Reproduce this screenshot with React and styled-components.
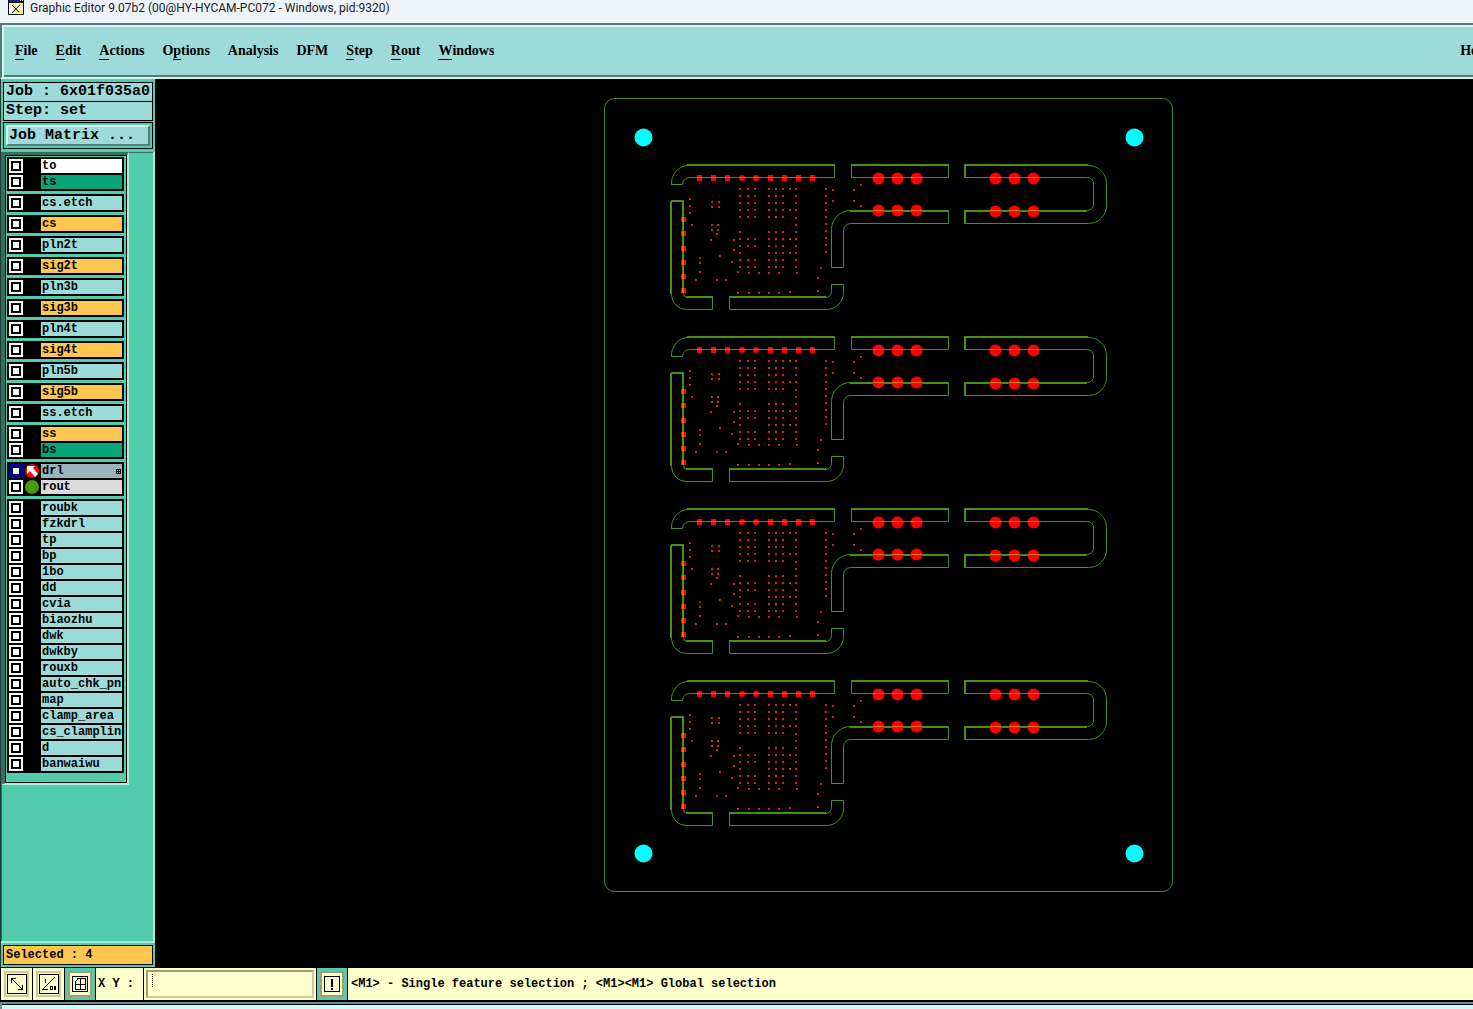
import styled, { createGlobalStyle, css } from "styled-components";

const colors = {
  aqua: "#9ddbda",
  teal: "#53ccad",
  tealDark: "#34705f",
  tealLight: "#a9ecd3",
  gold: "#ffc650",
  green: "#08a57b",
  cream: "#ffffcc",
  creamDark: "#a39c78",
  trace: "#459213",
  pad: "#ff0000",
  via: "#d62226",
};

const GlobalStyle = createGlobalStyle`
  * {
    box-sizing: border-box;
  }

  body {
    margin: 0;
    background: #000;
    overflow: hidden;
  }

  button, input {
    margin: 0;
    padding: 0;
    border-radius: 0;
    font: inherit;
    color: inherit;
  }
`;

const Window = styled.div`
  display: flex;
  flex-direction: column;
  height: 100vh;
  color: #000;
  font-family: "Liberation Mono", monospace;
  font-size: 12px;
  font-weight: bold;
`;

const TitleBar = styled.header`
  display: flex;
  align-items: flex-start;
  gap: 6px;
  height: 23px;
  padding-left: 8px;
  background: #eef3fa;
  color: #1b1b1b;
  font-family: Roboto, "Open Sans", sans-serif;
  font-size: 12px;
  font-weight: normal;
  line-height: 16px;
  white-space: nowrap;
`;

const MenuBar = styled.nav`
  display: flex;
  align-items: center;
  gap: 18px;
  flex: none;
  width: calc(100% + 20px);
  height: 56px;
  padding: 0 2px 0 13px;
  background: ${colors.aqua};
  border: 2px solid #547b7b;
  border-bottom-color: #d5f5f3;
  box-shadow: inset 2px 2px #d5f5f3, inset 0 -2px #547b7b;
  font-family: "Liberation Serif", serif;
  font-size: 14px;
`;

const MenuItem = styled.button`
  height: 20px;
  border: 0;
  background: none;
  line-height: 16px;
  ${({ $last }) => $last && css`margin-left: auto;`}

  span {
    display: inline-block;
    height: 17px;
    border-bottom: 1px solid #000;
  }
`;

const Workspace = styled.div`
  display: flex;
  flex: 1;
  min-height: 0;
`;

const Sidebar = styled.aside`
  display: flex;
  flex-direction: column;
  width: 155px;
  flex: none;
  border-left: 1px solid #1b3a33;
  background: ${colors.teal};
`;

const JobInfo = styled.div`
  display: grid;
  gap: 1px;
  margin: 3px 2px 0;
  border: 1px solid #000;
  background: #000;
  font-size: 15px;
`;

const InfoLine = styled.div`
  height: 18px;
  padding-left: 2px;
  background: ${colors.aqua};
  line-height: 18px;
  white-space: nowrap;
  overflow: hidden;
`;

const MatrixBox = styled.div`
  height: 27px;
  margin: 1px 2px 3px;
  padding: 2px;
  border: 1px solid #000;
  font-size: 15px;
`;

const MatrixButton = styled.button`
  display: block;
  width: 100%;
  height: 21px;
  padding-left: 1px;
  border: 2px solid;
  border-color: #d5f5f3 #547b7b #547b7b #d5f5f3;
  background: ${colors.aqua};
  line-height: 16px;
  text-align: left;
`;

const LayerArea = styled.div`
  flex: 1;
  min-height: 0;
  border: solid ${colors.tealLight};
  border-width: 0 2px 2px 0;
  box-shadow: inset 1px 1px ${colors.tealDark};
`;

const LayerFrame = styled.div`
  width: 128px;
  border: solid;
  border-width: 3px 2px 2px 4px;
  border-color: ${colors.tealDark} ${colors.tealLight} ${colors.tealLight} ${colors.tealDark};
`;

const LayerList = styled.div`
  display: flex;
  flex-direction: column;
  gap: 3px;
  padding: 1px 2px 9px 1px;
  border: 1px solid #000;
`;

const LayerGroup = styled.div`
  display: grid;
  gap: 2px;
  padding: 2px;
  background: #000;
`;

const LayerRow = styled.label`
  display: grid;
  grid-template-columns: 14px 18px 1fr;
  height: 14px;
`;

const LayerCheck = styled.input`
  appearance: none;
  width: 14px;
  height: 14px;
  border: 2px solid ${({ $active }) => ($active ? "#0000b8" : "#fff")};
  background: #fff;
  box-shadow: inset 0 0 0 2px ${({ $active }) => ($active ? "#000060" : "#000")};
`;

const Marker = styled.span`
  display: grid;
  place-items: center;
  height: 14px;
`;

const LayerName = styled.span`
  display: flex;
  align-items: center;
  justify-content: space-between;
  min-width: 0;
  padding-left: 1px;
  background: ${({ $color }) => $color || colors.aqua};
  line-height: 14px;
  white-space: nowrap;
  overflow: hidden;

  svg {
    margin-right: 1px;
  }
`;

const Selected = styled.div`
  height: 20px;
  margin: 2px;
  padding-left: 2px;
  border: 1px solid #000;
  background: ${colors.gold};
  line-height: 18px;
`;

const Canvas = styled.main`
  flex: 1;
  min-width: 0;
  background: #000;

  svg {
    display: block;
    width: 100%;
    height: 100%;
  }
`;

const StatusBar = styled.footer`
  display: flex;
  gap: 1px;
  height: 35px;
  padding: 1px 0 2px 1px;
  background: #000;
`;

const ToolButton = styled.button`
  display: grid;
  place-items: center;
  width: ${({ $on }) => ($on ? "30px" : "31px")};
  height: 32px;
  flex: none;
  border: 3px solid ${({ $on }) => ($on ? colors.teal : colors.cream)};
  background: ${colors.cream};
  box-shadow: inset 0 0 0 2px ${({ $on }) => ($on ? colors.creamDark : "#cdc99d")};
`;

const CoordLabel = styled.label`
  width: 47px;
  padding-left: 2px;
  background: ${colors.cream};
  line-height: 32px;
  white-space: nowrap;
`;

const CoordField = styled.div`
  width: 172px;
  padding: 2px;
  background: ${colors.cream};
`;

const CoordInput = styled.input`
  display: block;
  width: 100%;
  height: 28px;
  padding: 0 4px;
  border: 2px solid;
  border-color: ${colors.creamDark} #cdc99d #cdc99d ${colors.creamDark};
  background:
    repeating-linear-gradient(#000 0 1px, transparent 1px 2px) 4px 2px / 1px 14px no-repeat,
    ${colors.cream};
  outline: 0;
`;

const Message = styled.output`
  flex: 1;
  padding-left: 3px;
  background: ${colors.cream};
  line-height: 32px;
  white-space: nowrap;
`;

const LowerEdge = styled.div`
  height: 7px;
  flex: none;
  border-top: 2px solid #6b9290;
  border-left: 2px solid #6b9290;
  background: #ccfcfc;
  box-shadow: inset 0 1px #000;
`;

const menus = [
  ["", "F", "ile"],
  ["", "E", "dit"],
  ["", "A", "ctions"],
  ["O", "p", "tions"],
  ["Analysis", "", ""],
  ["DFM", "", ""],
  ["", "S", "tep"],
  ["", "R", "out"],
  ["", "W", "indows"],
  ["Help", "", ""],
];

const groups = [
  [{ name: "to", color: "#fff" }, { name: "ts", color: colors.green }],
  [{ name: "cs.etch" }],
  [{ name: "cs", color: colors.gold }],
  [{ name: "pln2t" }],
  [{ name: "sig2t", color: colors.gold }],
  [{ name: "pln3b" }],
  [{ name: "sig3b", color: colors.gold }],
  [{ name: "pln4t" }],
  [{ name: "sig4t", color: colors.gold }],
  [{ name: "pln5b" }],
  [{ name: "sig5b", color: colors.gold }],
  [{ name: "ss.etch" }],
  [{ name: "ss", color: colors.gold }, { name: "bs", color: colors.green }],
  [
    { name: "drl", color: "#9bb3bd", active: true, marker: "#f00" },
    { name: "rout", color: "#dadada", marker: "#459a06" },
  ],
  [
    "roubk", "fzkdrl", "tp", "bp", "1bo", "dd", "cvia", "biaozhu", "dwk", "dwkby",
    "rouxb", "auto_chk_pnl", "map", "clamp_area", "cs_clampline", "d", "banwaiwu",
  ].map((name) => ({ name })),
];

const column = (x, ys) => ys.map((y) => [x, y]);
const upper = [189, 196, 203, 210, 217];
const lower = [232, 239, 246, 253, 260, 267];

// drill hits of one unit, the other units repeat them every 172
const vias = [
  ...column(740, [...upper, ...lower]),
  ...[748, 755].flatMap((x) => column(x, [...upper, 239, 246, 260, 267])),
  ...[769, 776, 783].flatMap((x) => column(x, [...upper, ...lower])),
  ...column(790, [189, 210, 239, 253, 292]),
  ...column(796, [189, 196, 203, 210, 218, 225, ...lower]),
  ...column(826, [189, 196, 203, 210, 217, 224, 231, 238, 245, 252]),
  ...[833, 854].flatMap((x) => column(x, [190, 201])),
  ...column(861, [185, 206]),
  ...[749, 759, 769, 779].flatMap((x) => column(x, [273, 293])),
  ...column(690, [199, 206, 213]),
  ...[712, 719].flatMap((x) => column(x, [202, 207])),
  ...[712, 718].flatMap((x) => column(x, [225, 230])),
  ...column(700, [258, 263, 272]),
  [797, 273], [738, 272], [738, 293],
  [821, 268], [818, 278], [818, 291],
  [692, 225], [717, 234], [711, 240], [734, 240], [734, 250],
  [720, 256], [732, 262], [696, 280], [717, 280], [726, 280],
];

const topPads = [699, 713, 727, 742, 756, 770, 784, 798, 812];
const sidePads = [219, 233, 248, 262, 276, 290];
const holes = [
  ...[878, 897, 916].flatMap((x) => column(x, [178, 210])),
  ...[995, 1014, 1033].flatMap((x) => column(x, [178, 211])),
];

const Unit = ({ offset }) => (
  <g transform={`translate(0 ${offset})`}>
    <g fill={colors.via} shapeRendering="crispEdges">
      {vias.map(([x, y]) => (
        <rect key={`${x}-${y}`} x={x - 1} y={y - 1} width="2" height="2" />
      ))}
    </g>
    <g fill="none" stroke={colors.trace}>
      <path d="M834.500 165.500H688.500A17 18 0 0 0 671.500 184.500H682.500A7 7 0 0 1 689.500 177.500H834.500Z" />
      <path d="M671.500 201.500H683.500V293.500A4 4 0 0 0 687.500 297.500H712.500V309.500H686.500A15 15 0 0 1 671.500 294.500Z" />
      <path d="M729.500 297.500H825.500A6 6 0 0 0 831.500 291.500V284.500H843.500V292.500A17 17 0 0 1 826.500 309.500H729.500Z" />
      <path d="M831.500 267.500H843.500V230.500A7 7 0 0 1 850.500 223.500H948.500V210.500H850.500A19 19 0 0 0 831.500 229.500Z" />
      <path d="M851.500 165.500H948.500V177.500H851.500Z" />
      <path d="M964.500 165.500H1088.500A18 18 0 0 1 1106.500 183.500V205.500A18 18 0 0 1 1088.500 223.500H964.500V210.500H1087.500A6 6 0 0 0 1093.500 204.500V183.500A6 6 0 0 0 1087.500 177.500H964.500Z" />
    </g>
    <g fill="none" stroke={colors.trace} strokeWidth="2" shapeRendering="crispEdges">
      <path d="M687 165H835M851 165H949M964 165H1088M850 211H949M964 211H1087M671 201H684M686 297H713M729 297H826" />
      <path d="M671 201V294M683 201V293M965 165V178M965 211V224" />
    </g>
    <g fill={colors.pad}>
      {topPads.map((x) =>
        x === 742 || x === 756 ? (
          <circle key={x} cx={x} cy="178" r="3" />
        ) : (
          <rect key={x} x={x - 2} y="175" width="5" height="6" />
        )
      )}
      {sidePads.map((y) => (
        <rect key={y} x="681" y={y - 2} width="5" height="5" />
      ))}
      {holes.map(([x, y]) => (
        <circle key={`${x}-${y}`} cx={x + 0.5} cy={y + 0.5} r="6" />
      ))}
    </g>
    <g stroke="#e07800" shapeRendering="crispEdges">
      {topPads.map((x) => (
        <path key={x} d={`M${x - 2} 177.500h5`} />
      ))}
      {sidePads.map((y) => (
        <path key={y} strokeWidth="2" d={`M683 ${y - 2}v5`} />
      ))}
      {holes.map(([x, y]) => (
        <path key={`${x}-${y}`} d={`M${x - 5} ${y < 200 ? 177.5 : 210.5}h11`} />
      ))}
    </g>
  </g>
);

const Board = () => (
  <svg viewBox="155 79 1318 888" role="img" aria-label="set">
    <rect x="604.500" y="98.500" width="568" height="793" rx="10" fill="none" stroke={colors.trace} />
    {[[643, 137], [1134, 137], [643, 853], [1134, 853]].map(([x, y]) => (
      <circle key={`${x}-${y}`} cx={x + 0.5} cy={y + 0.5} r="9" fill="#0ff" />
    ))}
    {[0, 172, 344, 516].map((offset) => (
      <Unit key={offset} offset={offset} />
    ))}
  </svg>
);

const WindowIcon = () => (
  <svg width="16" height="16" viewBox="0 0 16 16" shapeRendering="crispEdges">
    <path d="M0 0h16v15H0z" fill="#111" />
    <path d="M1 0h10v2H1z" fill="#162a7a" />
    <path d="M12 0h1v1h-1zM14 0h1v1h-1z" fill="#fff" />
    <path d="M1 3h14v11H1z" fill="#f5f3e4" />
    <path d="M3 4h3l2 3 3-3h2L9 8l4 5h-3L8 10l-3 3H3l4-5z" fill="#e8df1c" />
    <path d="M4 5l7 7M12 5l-8 8" stroke="#333" fill="none" />
  </svg>
);

const ToolIcon = ({ children }) => (
  <svg width="20" height="20" viewBox="0 0 20 20" fill="none" stroke="#000" shapeRendering="crispEdges">
    {children}
  </svg>
);

const LayerMarker = ({ layer }) => (
  <svg width="14" height="14" viewBox="0 0 14 14">
    <circle cx="7" cy="7" r="7" fill={layer.marker} />
    {layer.active && <path d="M2 2h8L8 4l5 6-3 3-5-6-3 3z" fill="#fff" />}
  </svg>
);

const App = () => {
  return (
    <>
      <GlobalStyle />
      <Window>
        <TitleBar>
          <WindowIcon />
          Graphic Editor 9.07b2 (00@HY-HYCAM-PC072 - Windows, pid:9320)
        </TitleBar>
        <MenuBar>
          {menus.map(([before, key, after]) => (
            <MenuItem key={before + key + after} $last={before === "Help"}>
              {before}
              {key && <span>{key}</span>}
              {after}
            </MenuItem>
          ))}
        </MenuBar>
        <Workspace>
          <Sidebar>
            <JobInfo>
              <InfoLine>Job : 6x01f035a0</InfoLine>
              <InfoLine>Step: set</InfoLine>
            </JobInfo>
            <MatrixBox>
              <MatrixButton>Job Matrix ...</MatrixButton>
            </MatrixBox>
            <LayerArea>
              <LayerFrame>
                <LayerList>
                  {groups.map((layers) => (
                    <LayerGroup key={layers[0].name}>
                      {layers.map((layer) => (
                        <LayerRow key={layer.name}>
                          <LayerCheck type="checkbox" $active={layer.active} />
                          <Marker>{layer.marker && <LayerMarker layer={layer} />}</Marker>
                          <LayerName $color={layer.color}>
                            {layer.name}
                            {layer.active && (
                              <svg width="5" height="5" viewBox="0 0 5 5" fill="none" stroke="#000" shapeRendering="crispEdges">
                                <path d="M.5 .5h4v4h-4zM2.500 0v5M0 2.500h5" />
                              </svg>
                            )}
                          </LayerName>
                        </LayerRow>
                      ))}
                    </LayerGroup>
                  ))}
                </LayerList>
              </LayerFrame>
            </LayerArea>
            <Selected>Selected : 4</Selected>
          </Sidebar>
          <Canvas>
            <Board />
          </Canvas>
        </Workspace>
        <StatusBar>
          <ToolButton aria-label="Zoom extents">
            <ToolIcon>
              <path d="M.5 .5h19v19H.5zM5 5l10 10M4.500 9V4.500H9M11 15.500h4.500V11" />
            </ToolIcon>
          </ToolButton>
          <ToolButton aria-label="Angle">
            <ToolIcon>
              <path d="M.5 .5h19v19H.5zM3 16L16 3M3 15.500h6M6.500 5v4M11.500 12.500h2v3h-2zM15 12l2 4M17 12l-2 4" />
            </ToolIcon>
          </ToolButton>
          <ToolButton $on aria-label="Grid">
            <ToolIcon>
              <path d="M2.500 2.500h15v15h-15zM5.500 7.500L8 4.500h7.500v11h-10v-8zM10.500 4v12M5 10.500h11" />
            </ToolIcon>
          </ToolButton>
          <CoordLabel htmlFor="coords">X Y :</CoordLabel>
          <CoordField>
            <CoordInput id="coords" type="text" autoComplete="off" />
          </CoordField>
          <ToolButton $on aria-label="Stop">
            <ToolIcon>
              <path d="M2.500 2.500h15v15h-15z" />
              <path d="M10 5v8M10 14v2" strokeWidth="2" />
            </ToolIcon>
          </ToolButton>
          <Message>{"<M1> - Single feature selection ; <M1><M1> Global selection"}</Message>
        </StatusBar>
        <LowerEdge />
      </Window>
    </>
  );
};

export default App;
